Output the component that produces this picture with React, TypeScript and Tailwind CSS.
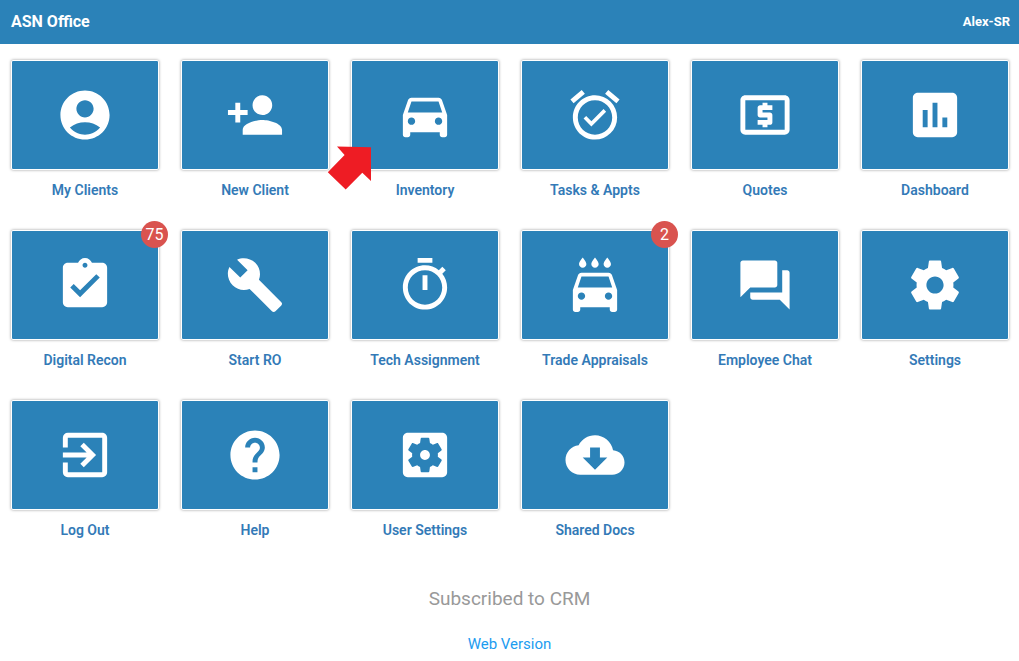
import React from "react";
import type { IconType } from "react-icons";
import {
  MdAccountCircle,
  MdAlarmOn,
  MdAssignmentTurnedIn,
  MdBuild,
  MdDirectionsCar,
  MdExitToApp,
  MdHelp,
  MdLocalAtm,
  MdLocalCarWash,
  MdPersonAdd,
  MdQuestionAnswer,
} from "react-icons/md";

interface IconProps {
  className?: string;
  viewBox?: string;
}

interface Tile {
  id: string;
  label: string;
  icon: IconType | React.FC<IconProps>;
  badge?: number;
  pointer?: boolean;
}

// 24 unit icons with a thin margin on every side
const ICON_BOX = "-0.2 -0.2 24.4 24.4";

const drawIcon = (d: string): React.FC<IconProps> =>
  function Icon({ className, viewBox }) {
    return (
      <svg viewBox={viewBox} fill="currentColor" className={className}>
        <path d={d} />
      </svg>
    );
  };

const ChartIcon = drawIcon(
  "M19 3H5c-1.1 0-2 .9-2 2v14c0 1.1.9 2 2 2h14c1.1 0 2-.9 2-2V5c0-1.1-.9-2-2-2zM9 17H7v-7h2v7zm4 0h-2V7h2v10zm4 0h-2v-4h2v4z"
);

const TimerIcon = drawIcon(
  "M15 1H9v2h6V1zm-4 13h2V8h-2v6zm8.03-6.61l1.42-1.42c-.43-.51-.9-.99-1.41-1.41l-1.42 1.42C16.07 4.74 14.12 4 12 4c-4.97 0-9 4.03-9 9s4.02 9 9 9 9-4.03 9-9c0-2.12-.74-4.07-1.97-5.61zM12 20c-3.87 0-7-3.13-7-7s3.13-7 7-7 7 3.13 7 7-3.13 7-7 7z"
);

const GearIcon = drawIcon(
  "M19.43 12.98c.04-.32.07-.64.07-.98s-.03-.66-.07-.98l2.11-1.65c.19-.15.24-.42.12-.64l-2-3.46c-.12-.22-.39-.3-.61-.22l-2.49 1c-.52-.4-1.08-.73-1.69-.98l-.38-2.65C14.46 2.18 14.25 2 14 2h-4c-.25 0-.46.18-.49.42l-.38 2.65c-.61.25-1.17.59-1.69.98l-2.49-1c-.23-.09-.49 0-.61.22l-2 3.46c-.13.22-.07.49.12.64l2.11 1.65c-.04.32-.07.65-.07.98s.03.66.07.98l-2.11 1.65c-.19.15-.24.42-.12.64l2 3.46c.12.22.39.3.61.22l2.49-1c.52.4 1.08.73 1.69.98l.38 2.65c.03.24.24.42.49.42h4c.25 0 .46-.18.49-.42l.38-2.65c.61-.25 1.17-.59 1.69-.98l2.49 1c.23.09.49 0 .61-.22l2-3.46c.12-.22.07-.49-.12-.64l-2.11-1.65zM12 15.5c-1.93 0-3.5-1.57-3.5-3.5s1.57-3.5 3.5-3.5 3.5 1.57 3.5 3.5-1.57 3.5-3.5 3.5z"
);

const GearBoxIcon = drawIcon(
  "M12 10c-1.1 0-2 .9-2 2s.9 2 2 2 2-.9 2-2-.9-2-2-2zm7-7H5c-1.11 0-2 .9-2 2v14c0 1.1.89 2 2 2h14c1.11 0 2-.9 2-2V5c0-1.1-.89-2-2-2zm-1.75 9c0 .23-.02.46-.05.68l1.48 1.16c.13.11.17.3.08.45l-1.4 2.42c-.09.15-.27.21-.43.15l-1.74-.7c-.36.28-.76.51-1.18.69l-.26 1.85c-.03.17-.18.3-.35.3h-2.8c-.17 0-.32-.13-.35-.29l-.26-1.85c-.43-.18-.82-.41-1.18-.69l-1.74.7c-.16.06-.34 0-.43-.15l-1.4-2.42c-.09-.15-.05-.34.08-.45l1.48-1.16c-.03-.23-.05-.46-.05-.69 0-.23.02-.46.05-.68l-1.48-1.16c-.13-.11-.17-.3-.08-.45l1.4-2.42c.09-.15.27-.21.43-.15l1.74.7c.36-.28.76-.51 1.18-.69l.26-1.85c.03-.17.18-.3.35-.3h2.8c.17 0 .32.13.35.29l.26 1.85c.43.18.82.41 1.18.69l1.74-.7c.16-.06.34 0 .43.15l1.4 2.42c.09.15.05.34-.08.45l-1.48 1.16c.03.23.05.46.05.69z"
);

const CloudIcon = drawIcon(
  "M19.35 10.04C18.67 6.59 15.64 4 12 4 9.11 4 6.6 5.64 5.35 8.04 2.34 8.36 0 10.91 0 14c0 3.31 2.69 6 6 6h13c2.76 0 5-2.24 5-5 0-2.64-2.05-4.78-4.65-4.96zM17 13l-5 5-5-5h3V9h4v4h3z"
);

const tiles: Tile[] = [
  { id: "my-clients", label: "My Clients", icon: MdAccountCircle },
  { id: "new-client", label: "New Client", icon: MdPersonAdd },
  { id: "inventory", label: "Inventory", icon: MdDirectionsCar, pointer: true },
  { id: "tasks", label: "Tasks & Appts", icon: MdAlarmOn },
  { id: "quotes", label: "Quotes", icon: MdLocalAtm },
  { id: "dashboard", label: "Dashboard", icon: ChartIcon },
  { id: "digital-recon", label: "Digital Recon", icon: MdAssignmentTurnedIn, badge: 75 },
  { id: "start-ro", label: "Start RO", icon: MdBuild },
  { id: "tech-assignment", label: "Tech Assignment", icon: TimerIcon },
  { id: "trade-appraisals", label: "Trade Appraisals", icon: MdLocalCarWash, badge: 2 },
  { id: "employee-chat", label: "Employee Chat", icon: MdQuestionAnswer },
  { id: "settings", label: "Settings", icon: GearIcon },
  { id: "log-out", label: "Log Out", icon: MdExitToApp },
  { id: "help", label: "Help", icon: MdHelp },
  { id: "user-settings", label: "User Settings", icon: GearBoxIcon },
  { id: "shared-docs", label: "Shared Docs", icon: CloudIcon },
];

const MenuTile = ({ tile }: { tile: Tile }) => {
  const Icon = tile.icon;

  return (
    <a href={`#${tile.id}`} className="block text-center">
      <div className="relative flex h-[110px] items-center justify-center rounded-xs border border-white bg-[#2b82b8] shadow-[0_0_3px_rgba(0,0,0,0.4)]">
        <Icon viewBox={ICON_BOX} className="size-[60px] text-white" />

        {tile.badge && (
          <span className="absolute -top-[10px] -right-[10px] size-[27px] rounded-full bg-[#d9534f] text-base leading-[27px] text-white">
            {tile.badge}
          </span>
        )}

        {tile.pointer && (
          <svg
            viewBox="0 0 45 44"
            className="absolute top-[85px] -left-[25px] h-[44px] w-[45px]"
          >
            <path d="M10 .5L44 1.2V35L35.3 26.7 18.7 43.4.8 26.3 17.6 9z" fill="#ee1c24" />
          </svg>
        )}
      </div>
      <span className="mt-[10px] block text-sm font-semibold text-[#337ab7]">
        {tile.label}
      </span>
    </a>
  );
};

const App = () => {
  return (
    <div className="font-[Roboto,sans-serif]">
      <header className="flex h-11 items-center justify-between bg-[#2b82b8] pr-[9px] pl-[11px] text-white">
        <h1 className="text-base font-bold">ASN Office</h1>
        <span className="text-[13px] font-bold">Alex-SR</span>
      </header>

      <main>
        <ul className="grid grid-cols-6 gap-x-[22px] gap-y-[30px] pt-4 pr-[10px] pl-[11px]">
          {tiles.map((tile) => (
            <li key={tile.id}>
              <MenuTile tile={tile} />
            </li>
          ))}
        </ul>
      </main>

      <footer className="mt-[45px] flex flex-col items-center">
        <p className="text-[19px] leading-7 text-[#999]">Subscribed to CRM</p>
        <a href="#web" className="mt-[19px] text-[15px] leading-6 text-[#1c9cf0]">
          Web Version
        </a>
      </footer>
    </div>
  );
};

export default App;
